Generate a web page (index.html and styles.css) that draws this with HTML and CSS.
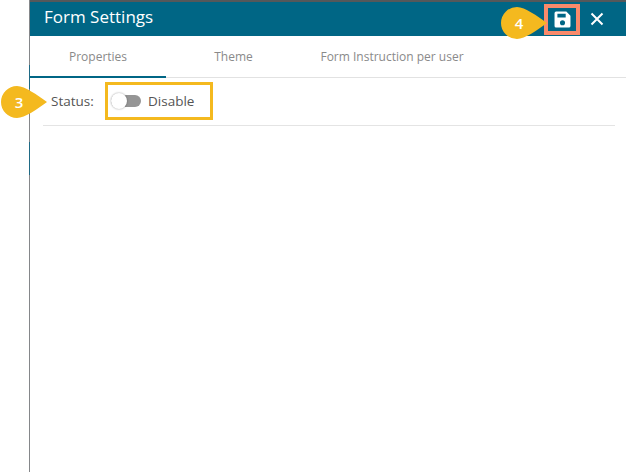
FILE: index.html
```html
<!DOCTYPE html>
<html lang="en">
<head>
  <meta charset="UTF-8">
  <title>Form Settings</title>
  <link rel="stylesheet" href="styles.css">
</head>
<body>
  <div class="panel">
    <!-- Header -->
    <div class="panel-header">
      <div class="panel-title">Form Settings</div>
      <div class="header-actions">
        <div class="save-box">
          <svg class="save-icon" viewBox="0 0 16 16" width="17" height="17">
            <path fill="#fff" fill-rule="evenodd" d="M2 0.5h9.6l3.9 3.9v9.6a1.5 1.5 0 0 1-1.5 1.5h-12a1.5 1.5 0 0 1-1.5-1.5v-12a1.5 1.5 0 0 1 1.5-1.5zM3.2 2.6v3.6h7.8v-3.6zM8 8.6a2.4 2.4 0 1 0 0 4.8a2.4 2.4 0 0 0 0-4.8z"/>
          </svg>
        </div>
        <svg class="close-icon" viewBox="0 0 14 14" width="14" height="14">
          <path stroke="#fff" stroke-width="2" d="M1.5 1.5l11 11M12.5 1.5l-11 11"/>
        </svg>
      </div>
    </div>

    <!-- Tabs -->
    <div class="tabs">
      <div class="tab tab-active">Properties</div>
      <div class="tab tab-theme">Theme</div>
      <div class="tab tab-instruction">Form Instruction per user</div>
    </div>

    <!-- Status -->
    <div class="status-row">
      <span class="status-label">Status:</span>
      <div class="status-box">
        <span class="toggle"><span class="toggle-knob"></span></span>
        <span class="toggle-text">Disable</span>
      </div>
    </div>
  </div>

  <!-- Callouts -->
  <div class="callout callout-3">
    <svg viewBox="0 0 46 32" width="46" height="32"><path fill="#f4b91f" d="M16 0C24 0 36 9 46 16C36 23 24 32 16 32A16 16 0 0 1 16 0z"/></svg>
    <span class="callout-num">3</span>
  </div>
  <div class="callout callout-4">
    <svg viewBox="0 0 46 32" width="46" height="32"><path fill="#f4b91f" d="M16 0C24 0 36 9 46 16C36 23 24 32 16 32A16 16 0 0 1 16 0z"/></svg>
    <span class="callout-num">4</span>
  </div>
</body>
</html>
```

FILE: styles.css
```css
html, body {
  height: 100%;
}
body {
  margin: 0;
  background: #fff;
  font-family: 'Open Sans', Arial, sans-serif;
  position: relative;
  overflow: hidden;
}
.panel {
  margin-left: 29px;
  height: 100%;
  box-sizing: border-box;
  border-left: 1px solid #85878a;
  border-image: linear-gradient(to bottom, #85878a 66px, #1f6a85 66px, #1f6a85 90px, #85878a 90px, #85878a 142px, #1f6a85 142px, #1f6a85 175px, #85878a 175px) 1;
}
.panel-header {
  height: 34px;
  border-top: 2px solid #55585a;
  background: #006685;
  color: #fff;
  display: flex;
  align-items: center;
  justify-content: space-between;
  padding: 0 22px 0 14px;
}
.panel-title {
  font-size: 17px;
  line-height: 30px;
  margin-bottom: 4px;
}
.header-actions {
  display: flex;
  align-items: center;
  gap: 10px;
}
.save-box {
  width: 36px;
  height: 31px;
  box-sizing: border-box;
  border: 4px solid #f98a6b;
  display: flex;
  align-items: center;
  justify-content: center;
}
.close-icon {
  display: block;
}
.tabs {
  display: flex;
  height: 42px;
  box-sizing: border-box;
  border-bottom: 1px solid #e2e2e2;
  font-size: 12px;
  color: #8a8a8a;
}
.tab {
  line-height: 41px;
  text-align: center;
  height: 42px;
  box-sizing: border-box;
}
.tab-active {
  width: 136px;
  border-bottom: 2px solid #006685;
}
.tab-theme {
  width: 135px;
}
.tab-instruction {
  width: 182px;
}
.status-row {
  display: flex;
  align-items: center;
  height: 48px;
  box-sizing: border-box;
  margin: 0 11px 0 13px;
  border-bottom: 1px solid #e4e4e4;
  color: #555;
  font-size: 13.5px;
  padding: 0 0 1px 8px;
}
.status-label {
  width: 54px;
}
.status-box {
  display: flex;
  align-items: center;
  gap: 7px;
  width: 108px;
  height: 38px;
  box-sizing: border-box;
  border: 3px solid #f4b91f;
  padding-left: 3px;
}
.toggle {
  position: relative;
  display: block;
  width: 30px;
  height: 12px;
  border-radius: 6px;
  background: #959595;
}
.toggle-knob {
  position: absolute;
  left: 0;
  top: -2px;
  width: 16px;
  height: 16px;
  border-radius: 50%;
  background: #fff;
  box-shadow: 0 0 2px #0006;
}
.callout {
  position: absolute;
  width: 46px;
  height: 32px;
}
.callout svg {
  display: block;
}
.callout-num {
  position: absolute;
  left: 0;
  top: 0;
  width: 36px;
  line-height: 32px;
  text-align: center;
  color: #fff;
  font-size: 15px;
  font-weight: 600;
}
.callout-3 {
  left: 1px;
  top: 86px;
}
.callout-4 {
  left: 501px;
  top: 7px;
}
```
